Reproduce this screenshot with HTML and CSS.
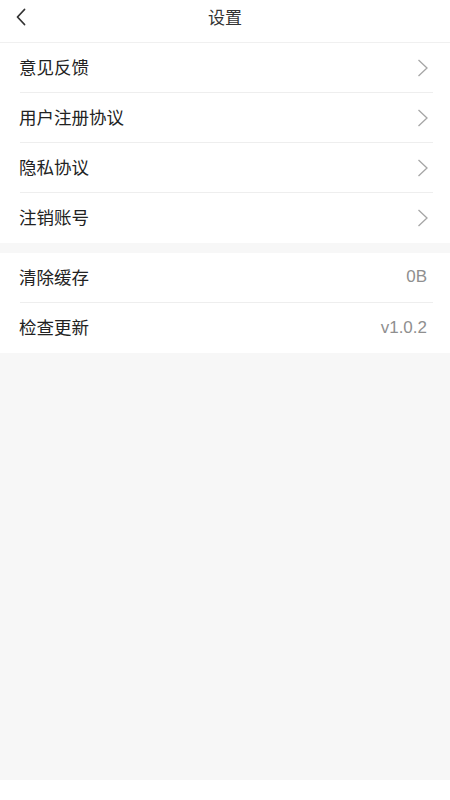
FILE: index.html
```html
<!DOCTYPE html>
<html lang="zh-CN">
<head>
<meta charset="utf-8">
<title>设置</title>
<link rel="stylesheet" href="styles.css">
</head>
<body>
<div class="page">
  <header class="nav">
    <span class="back">
      <svg width="12" height="18" viewBox="0 0 12 18"><path d="M9.5 1.5 L2.5 9 L9.5 16.5" fill="none" stroke="#333" stroke-width="1.8" stroke-linecap="round" stroke-linejoin="round"/></svg>
    </span>
    <h1 class="title">设置</h1>
  </header>
  <main class="content">
    <section class="group">
      <div class="row"><span class="label">意见反馈</span><svg class="arrow" width="12" height="18" viewBox="0 0 12 18"><path d="M1.5 1 L10 9 L1.5 17" fill="none" stroke="#a6a6a6" stroke-width="1.3"/></svg></div>
      <div class="row"><span class="label">用户注册协议</span><svg class="arrow" width="12" height="18" viewBox="0 0 12 18"><path d="M1.5 1 L10 9 L1.5 17" fill="none" stroke="#a6a6a6" stroke-width="1.3"/></svg></div>
      <div class="row"><span class="label">隐私协议</span><svg class="arrow" width="12" height="18" viewBox="0 0 12 18"><path d="M1.5 1 L10 9 L1.5 17" fill="none" stroke="#a6a6a6" stroke-width="1.3"/></svg></div>
      <div class="row"><span class="label">注销账号</span><svg class="arrow" width="12" height="18" viewBox="0 0 12 18"><path d="M1.5 1 L10 9 L1.5 17" fill="none" stroke="#a6a6a6" stroke-width="1.3"/></svg></div>
    </section>
    <section class="group">
      <div class="row"><span class="label">清除缓存</span><span class="value">0B</span></div>
      <div class="row"><span class="label">检查更新</span><span class="value">v1.0.2</span></div>
    </section>
  </main>
  <footer class="bottom"></footer>
</div>
</body>
</html>
```
FILE: styles.css
```css
* { box-sizing: border-box; }
html, body { margin: 0; padding: 0; }
body {
  font-family: "Liberation Sans", "Noto Sans CJK SC", sans-serif;
  background: #f7f7f7;
  color: #222;
}
.page {
  width: 450px;
  height: 800px;
  display: flex;
  flex-direction: column;
}
.nav {
  height: 43px;
  background: #fff;
  border-bottom: 1px solid #f0f0f0;
  display: flex;
  align-items: center;
  justify-content: center;
  position: relative;
  flex-shrink: 0;
}
.back {
  position: absolute;
  left: 15px;
  top: 8px;
  display: flex;
}
.title {
  margin: 0 0 10px 0;
  font-family: "Noto Sans CJK SC", sans-serif;
  font-size: 17px;
  line-height: 1;
  font-weight: normal;
  color: #333;
}
.content {
  flex: 1;
  display: flex;
  flex-direction: column;
  gap: 10px;
}
.group {
  background: #fff;
  padding: 0 17px 0 20px;
}
.row {
  height: 50px;
  display: flex;
  align-items: center;
  justify-content: space-between;
  border-bottom: 1px solid #eeeeee;
}
.row:last-child { border-bottom: none; }
.label {
  font-family: "Noto Sans CJK SC", sans-serif;
  font-size: 17.5px;
  line-height: 1;
  color: #222;
  margin-left: -1px;
  margin-bottom: 2px;
}
.arrow { margin-right: 4px; }
.value {
  font-size: 17px;
  line-height: 1;
  color: #8f8f8f;
  margin-right: 6px;
  margin-bottom: 2px;
}
.bottom {
  height: 20px;
  background: #fff;
  flex-shrink: 0;
}
```
